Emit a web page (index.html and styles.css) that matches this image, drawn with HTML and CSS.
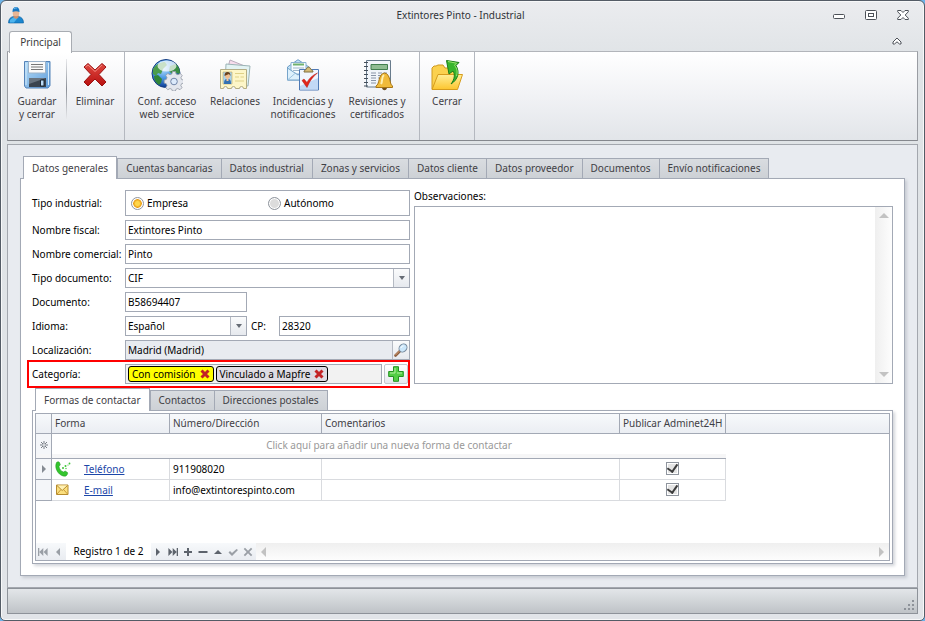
FILE: index.html
```
<!DOCTYPE html>
<html lang="es">
<head>
    <meta charset="UTF-8">
    <meta name="viewport" content="width=device-width, initial-scale=1.0">
    <title>Extintores Pinto - Industrial</title>
    <link rel="stylesheet" href="styles.css">
</head>
<body>
    <div class="window">
        <header class="titlebar">
            <svg class="app-icon" viewBox="0 0 16 18">
                <path d="M.5 17c0-4 2-6 5-6.500h5c3 .5 5 2.500 5 6.500z" fill="#1b87cf" stroke="#0b5ea0" stroke-width=".6"/>
                <path d="M2 14l3-2.500h5l-4 5H2z" fill="#4db4ee"/>
                <path d="M5.500 9h5v2.500L8 13l-2.500-1.500z" fill="#c98f6c"/>
                <circle cx="8" cy="7" r="3.300" fill="#e7b695"/>
                <path d="M4.500 6C4.300 2.500 6 1 8 1s3.700 1.500 3.500 5C9.500 5 6.500 5 4.500 6z" fill="#1677c2"/>
                <path d="M6 3c1-1 2-1.200 3-1" stroke="#7fc8f5" fill="none"/>
            </svg>
            <h1>Extintores Pinto - Industrial</h1>
            <div class="window-buttons">
                <button type="button" aria-label="Minimizar">
                    <svg viewBox="0 0 12 12"><rect x=".5" y="5.500" width="11" height="4" rx="1" fill="#fff" stroke="#4c5158"/></svg>
                </button>
                <button type="button" aria-label="Maximizar">
                    <svg viewBox="0 0 12 12"><rect x=".5" y="1.500" width="11" height="9" rx="1" fill="#fff" stroke="#4c5158"/><rect x="3.500" y="4.500" width="5" height="3" fill="#fff" stroke="#4c5158"/></svg>
                </button>
                <button type="button" aria-label="Cerrar ventana">
                    <svg viewBox="0 0 12 12"><path d="M.7 1.500h3.300l2 2 2-2h3.300v1.300L8.200 6l3.100 3.200v1.300H8l-2-2-2 2H.7V9.200L3.800 6 .7 2.800z" fill="#fff" stroke="#4c5158"/></svg>
                </button>
            </div>
        </header>

        <nav class="ribbon-tabs">
            <button type="button" class="ribbon-tab">Principal</button>
            <button type="button" class="ribbon-toggle" aria-label="Contraer cinta">
                <svg viewBox="0 0 10 8"><path d="M5 1l4 4v2H7.500L5 4.800 2.500 7H1V5z" fill="#fff" stroke="#4c5158"/></svg>
            </button>
        </nav>

        <div class="ribbon">
            <div class="ribbon-group">
                <button type="button" class="ribbon-button">
                    <svg viewBox="0 0 32 32">
                        <defs>
                            <linearGradient id="disk" x1="0" y1="0" x2="1" y2="1"><stop offset="0" stop-color="#b5dbf6"/><stop offset="1" stop-color="#5f9ddb"/></linearGradient>
                        </defs>
                        <path d="M3.500 2.500h25.500v24L27 29H5l-1.500-2z" fill="url(#disk)" stroke="#5583b8"/>
                        <path d="M5 4v22M27.500 4v22" stroke="#d4ebfb"/>
                        <path d="M7.500 2.500h17V14h-17z" fill="#fafafa" stroke="#9cb3ca"/>
                        <path d="M10 5.500h12M10 8h12M10 10.500h12" stroke="#777"/>
                        <path d="M8 19h17v9H8z" fill="#3b444f"/>
                        <path d="M8 19h17l-17 6z" fill="#68737f"/>
                        <path d="M19.500 21h3.500v6h-3.500z" fill="#bcdcf7" stroke="#1b2733"/>
                    </svg>
                    <span>Guardar<br>y cerrar</span>
                </button>
                <div class="ribbon-separator"></div>
                <button type="button" class="ribbon-button">
                    <svg viewBox="0 0 32 32">
                        <defs>
                            <linearGradient id="cross" x1="0" y1="0" x2="0" y2="1"><stop offset="0" stop-color="#e04a42"/><stop offset="1" stop-color="#b80f0f"/></linearGradient>
                        </defs>
                        <path d="M9 4.500l7 6.500 7-6.500L27 8l-7 7.500 7 7.500-4 4-7-7-7 7-4-4 7-7.500L5 8z" fill="url(#cross)" stroke="#9b1212" stroke-linejoin="round"/>
                        <path d="M6.500 8L9 6l7 6.500L23 6" stroke="#f28a80" fill="none"/>
                    </svg>
                    <span>Eliminar</span>
                </button>
            </div>

            <div class="ribbon-group">
                <button type="button" class="ribbon-button wide">
                    <svg viewBox="0 0 32 32">
                        <defs>
                            <radialGradient id="globe" cx=".4" cy=".3" r=".7"><stop offset="0" stop-color="#c2e2fc"/><stop offset=".5" stop-color="#4e9be4"/><stop offset="1" stop-color="#0a3a94"/></radialGradient>
                        </defs>
                        <circle cx="15" cy="14.500" r="14" fill="url(#globe)" stroke="#163c80"/>
                        <path d="M2 10c3-5 8-7 12-7l2 3-4 4-2 5-3-1-2 3-3-2z" fill="#4b9c4c"/>
                        <path d="M3 17l4-1 4 4-1 4-2 2c-3-2-5-5-5-9z" fill="#318636"/>
                        <path d="M19 7l6-2c3 3 4 6 4 10l-4-1-3 2-4-4z" fill="#398e43"/>
                        <ellipse cx="16" cy="7" rx="9.500" ry="5.500" fill="#fff" opacity=".7"/>
                        <g stroke="#9298a3" fill="#e3e6ed">
                            <path d="M21.500 12.500h3l.6 2.500 1.900.8 2.200-1.300 2 2-1.300 2.200.7 1.800 2 .6v3l-2 .6-.8 1.800 1.200 2.200-2 2-2.200-1.200-1.900.8-.5 1.700h-3l-.6-1.700-1.800-.8-2.200 1.200-2-2 1.200-2.200-.8-1.800-2-.6v-3l2-.6.8-1.800-1.200-2.200 2-2 2.200 1.300 1.800-.8z" stroke-width=".8"/>
                            <circle cx="23" cy="22.500" r="3.300" fill="#dceafb" stroke="#7185a8"/>
                        </g>
                    </svg>
                    <span>Conf. acceso<br>web service</span>
                </button>
                <button type="button" class="ribbon-button medium">
                    <svg viewBox="0 0 32 32">
                        <path d="M11 1l17 7-5 14L7 15z" fill="#f7dcec" stroke="#b9abbc"/>
                        <path d="M7 5l24 2-2 20-23-2z" fill="#e3f3f3" stroke="#9cb4b6"/>
                        <path d="M1.500 10.500h26v19h-3a2 2 0 0 0-4 0h-4a2 2 0 0 0-4 0h-4a2 2 0 0 0-4 0h-3z" fill="#fdf6c8" stroke="#b4ad85"/>
                        <path d="M4 13h9v12H4z" fill="#a9d4ee" stroke="#c0a65d" stroke-width=".6"/>
                        <path d="M5 25c0-4 1-5 3.500-5s3.500 1 3.500 5z" fill="#3471b2"/>
                        <path d="M7.500 18h2v4h-2z" fill="#f2c69c"/>
                        <circle cx="8.500" cy="17" r="2.500" fill="#f0be91"/>
                        <path d="M5.500 17c0-3 1-4 3-4s3 1 3 4l-1.500-2z" fill="#6a421c"/>
                        <path d="M16 14.500h9M16 18h4M21.500 18H25M16 22h9" stroke="#dfd188"/>
                    </svg>
                    <span>Relaciones</span>
                </button>
                <button type="button" class="ribbon-button wide">
                    <svg viewBox="0 0 32 32">
                        <path d="M.5 8L11 .7 22 8v13H.5z" fill="#c5e3f7" stroke="#6a9bc4"/>
                        <path d="M4 3.500h15V15H4z" fill="#f7fcff" stroke="#8ab1d0"/>
                        <path d="M6 5.500h11" stroke="#70b16d" stroke-width="2"/>
                        <path d="M6 9h11M6 11.500h11" stroke="#9db5c9"/>
                        <path d="M.5 9l10.500 7 11-7v12H.5z" fill="#ddf0fc" stroke="#76a4ca"/>
                        <path d="M.5 21l8-7M22 21l-8-7" stroke="#9dc3df"/>
                        <path d="M12.500 10.500h19v20.500h-19z" fill="#f0f6ff" stroke="#4e79b5"/>
                        <path d="M13 27l18-8v11.500H13z" fill="#c2d9f6"/>
                        <path d="M17 13c0-2 1.500-2 2.500-3 0-2.500 4-2.500 4 0 1 1 2.500 1 2.500 3z" fill="#d5bc78" stroke="#807041"/>
                        <path d="M15 21.500l2-1.500 3 3.500c2-4 5-7 10.500-9.500C26 17.500 22.500 22 20 28.500z" fill="#e3261b" stroke="#b01410" stroke-width=".5"/>
                    </svg>
                    <span>Incidencias y<br>notificaciones</span>
                </button>
                <button type="button" class="ribbon-button wide">
                    <svg viewBox="0 0 32 32">
                        <path d="M5.500 1.500h24v26.500h-24z" fill="#f1f5fa" stroke="#687b8c"/>
                        <path d="M10 5.500h16.500v5H10z" fill="#8fbd92" stroke="#417e4e"/>
                        <path d="M10 14h5M17 14h4M22.500 14H26M10 16.500h5M17 16.500h4M10 19h5M17 19h3M10 21.500h5M10 24h5" stroke="#8994a6"/>
                        <path d="M3 3.500h4M3 7.500h4M3 11.500h4M3 15.500h4M3 19.500h4M3 23.500h4M3 27h4" stroke="#454e59"/>
                        <path d="M15 27c4-2 2-12 8.500-13 6.500 1 4.500 11 8 13v1.500H15z" fill="#f1bb3a" stroke="#a77516"/>
                        <path d="M20 25c2-3 0-7 3-9" stroke="#fff0b3" stroke-width="2" fill="none"/>
                        <path d="M21 29h5c-1 3-4 3-5 0z" fill="#71501f"/>
                    </svg>
                    <span>Revisiones y<br>certificados</span>
                </button>
            </div>

            <div class="ribbon-group">
                <button type="button" class="ribbon-button narrow">
                    <svg viewBox="0 0 32 32">
                        <defs>
                            <linearGradient id="folder" x1="0" y1="0" x2="0" y2="1"><stop offset="0" stop-color="#ffee96"/><stop offset="1" stop-color="#fcc52e"/></linearGradient>
                        </defs>
                        <path d="M1 30V9l2-2h2l2-1h5l2 3h11v6" fill="#fbd14e" stroke="#cf991f"/>
                        <path d="M1 30.500l6-15h24.500l-5 15z" fill="url(#folder)" stroke="#d69c1c"/>
                        <path d="M20 25c4-5 4-10 2-13l-4 3L15.500 1.500 28 3.500l-3 3c4 7 2 14-5 18.500z" fill="#38b52d" stroke="#1b7d19"/>
                        <path d="M17 2.500l8.500 1.700-2 2c3 4 3 7 2 11" stroke="#9be46f" fill="none"/>
                    </svg>
                    <span>Cerrar</span>
                </button>
            </div>
        </div>

        <main class="content">
            <div class="tabs">
                <button type="button" class="tab active">Datos generales</button>
                <button type="button" class="tab">Cuentas bancarias</button>
                <button type="button" class="tab">Datos industrial</button>
                <button type="button" class="tab">Zonas y servicios</button>
                <button type="button" class="tab">Datos cliente</button>
                <button type="button" class="tab">Datos proveedor</button>
                <button type="button" class="tab">Documentos</button>
                <button type="button" class="tab">Envío notificaciones</button>
            </div>

            <section class="panel">
                <form class="form">
                    <div class="fields">
                        <div class="row" role="radiogroup" aria-labelledby="tipo-label">
                            <span class="label" id="tipo-label">Tipo industrial:</span>
                            <div class="radios">
                                <label><input type="radio" name="tipo" checked>Empresa</label>
                                <label><input type="radio" name="tipo">Autónomo</label>
                            </div>
                        </div>
                        <div class="row">
                            <label class="label" for="fiscal">Nombre fiscal:</label>
                            <input type="text" class="input" id="fiscal" value="Extintores Pinto">
                        </div>
                        <div class="row">
                            <label class="label" for="comercial">Nombre comercial:</label>
                            <input type="text" class="input" id="comercial" value="Pinto">
                        </div>
                        <div class="row">
                            <label class="label" for="tipodoc">Tipo documento:</label>
                            <div class="combo">
                                <select id="tipodoc"><option>CIF</option></select>
                                <span class="combo-arrow"></span>
                            </div>
                        </div>
                        <div class="row">
                            <label class="label" for="documento">Documento:</label>
                            <input type="text" class="input short" id="documento" value="B58694407">
                        </div>
                        <div class="row">
                            <label class="label" for="idioma">Idioma:</label>
                            <div class="combo short">
                                <select id="idioma"><option>Español</option></select>
                                <span class="combo-arrow"></span>
                            </div>
                            <label class="label-cp" for="cp">CP:</label>
                            <input type="text" class="input" id="cp" value="28320">
                        </div>
                        <div class="row">
                            <label class="label" for="localizacion">Localización:</label>
                            <div class="lookup">
                                <input type="text" id="localizacion" value="Madrid (Madrid)" readonly>
                                <button type="button" aria-label="Buscar localización">
                                    <svg viewBox="0 0 14 14">
                                        <path d="M1.500 12.500L6 8" stroke="#8b5c3b" stroke-width="2.600" stroke-linecap="round"/>
                                        <path d="M1.500 12L5.500 8" stroke="#dca47b" stroke-linecap="round"/>
                                        <ellipse cx="9" cy="5" rx="4.300" ry="3.600" transform="rotate(-45 9 5)" fill="#cbe7fb" stroke="#76889b"/>
                                        <path d="M7 5c.3-1.500 1-2 2.500-2" stroke="#fff" fill="none"/>
                                    </svg>
                                </button>
                            </div>
                        </div>
                        <div class="row highlight">
                            <span class="label">Categoría:</span>
                            <div class="chips">
                                <span class="chip yellow">Con comisión
                                    <button type="button" aria-label="Quitar Con comisión"><svg viewBox="0 0 10 10"><path d="M1.500 1.500l7 7M8.500 1.500l-7 7" stroke="#c32225" stroke-width="3"/></svg></button>
                                </span>
                                <span class="chip">Vinculado a Mapfre
                                    <button type="button" aria-label="Quitar Vinculado a Mapfre"><svg viewBox="0 0 10 10"><path d="M1.500 1.500l7 7M8.500 1.500l-7 7" stroke="#c32225" stroke-width="3"/></svg></button>
                                </span>
                            </div>
                            <button type="button" class="add" aria-label="Añadir categoría">
                                <svg viewBox="0 0 16 16">
                                    <path d="M5.500.7h5v4.800h4.800v5h-4.800v4.800h-5v-4.800H.7v-5h4.800z" fill="#53cd45" stroke="#239321" stroke-linejoin="round"/>
                                    <path d="M7 2v5H2M9 7h5" stroke="#b2f0a0" fill="none"/>
                                </svg>
                            </button>
                        </div>
                    </div>

                    <div class="notes">
                        <label for="observaciones">Observaciones:</label>
                        <div class="notes-box">
                            <textarea id="observaciones"></textarea>
                            <div class="scroll-y"><i class="arrow up"></i><i class="arrow down"></i></div>
                        </div>
                    </div>
                </form>

                <div class="tabs inner">
                    <button type="button" class="tab active">Formas de contactar</button>
                    <button type="button" class="tab">Contactos</button>
                    <button type="button" class="tab">Direcciones postales</button>
                </div>

                <div class="subpanel">
                    <div class="grid">
                        <table>
                            <colgroup>
                                <col class="col-mark"><col class="col-form"><col class="col-number"><col class="col-comments"><col class="col-publish"><col>
                            </colgroup>
                            <thead>
                                <tr><th></th><th>Forma</th><th>Número/Dirección</th><th>Comentarios</th><th>Publicar Adminet24H</th><th></th></tr>
                            </thead>
                            <tbody>
                                <tr class="new-row">
                                    <td class="mark"><svg viewBox="0 0 8 8"><path d="M4 0v8M0 4h8M1 1l6 6M7 1L1 7" stroke="#777d85"/><circle cx="4" cy="4" r="1" fill="#f4f6f9"/></svg></td>
                                    <td colspan="4">Click aquí para añadir una nueva forma de contactar</td>
                                    <td class="blank"></td>
                                </tr>
                                <tr>
                                    <td class="mark"><svg viewBox="0 0 8 8"><path d="M2 0l4 4-4 4z" fill="#858b93"/></svg></td>
                                    <td>
                                        <div class="kind">
                                            <svg viewBox="0 0 16 16">
                                                <path d="M1.500 1.500c1-1 2.500-1 3 0l.8 2.200L4 5.500c.3 2.500 2 4.700 4.500 5.500l1.700-1 2.300 1.500c.6 1-.5 2.500-1.500 3.500C5 16.500-1.500 8 1.500 1.500z" fill="#34c52e" stroke="#1e9522" stroke-width=".5"/>
                                                <g fill="#3ec636"><circle cx="8" cy="7" r="1"/><circle cx="10.500" cy="5" r="1"/><circle cx="11" cy="7.500" r=".7"/><circle cx="14.500" cy="2.500" r=".9"/><circle cx="13" cy="4" r=".6"/></g>
                                            </svg>
                                            <a href="#">Teléfono</a>
                                        </div>
                                    </td>
                                    <td>911908020</td>
                                    <td></td>
                                    <td class="center"><input type="checkbox" aria-label="Publicar teléfono" checked></td>
                                    <td class="blank"></td>
                                </tr>
                                <tr>
                                    <td class="mark"></td>
                                    <td>
                                        <div class="kind">
                                            <svg viewBox="0 0 16 16">
                                                <path d="M1.500 3h11.500v9.500H1.500z" fill="#fbdf7e" stroke="#b68b2e"/>
                                                <path d="M2 12l4-4.500M12.500 12l-4-4.500" stroke="#c99a36"/>
                                                <path d="M2 3.500l5.200 5 5.300-5" fill="#fff1b5" stroke="#b68b2e"/>
                                            </svg>
                                            <a href="#">E-mail</a>
                                        </div>
                                    </td>
                                    <td>info@extintorespinto.com</td>
                                    <td></td>
                                    <td class="center"><input type="checkbox" aria-label="Publicar e-mail" checked></td>
                                    <td class="blank"></td>
                                </tr>
                            </tbody>
                        </table>

                        <div class="navigator">
                            <button type="button" class="off" aria-label="Primero"><svg viewBox="0 0 10 10"><path d="M0 1h1.300v8H0zM5.300 1v8l-4-4zM9.600 1v8l-4-4z"/></svg></button>
                            <button type="button" class="off" aria-label="Anterior"><svg viewBox="0 0 10 10"><path d="M7 1v8L3 5z"/></svg></button>
                            <span class="record">Registro 1 de 2</span>
                            <button type="button" aria-label="Siguiente"><svg viewBox="0 0 10 10"><path d="M3 1v8l4-4z"/></svg></button>
                            <button type="button" aria-label="Último"><svg viewBox="0 0 10 10"><path d="M8.700 1H10v8H8.700zM4.700 1v8l4-4zM.4 1v8l4-4z"/></svg></button>
                            <button type="button" aria-label="Añadir"><svg viewBox="0 0 10 10"><path d="M4 1h2v3h3v2H6v3H4V6H1V4h3z"/></svg></button>
                            <button type="button" aria-label="Borrar"><svg viewBox="0 0 10 10"><path d="M.5 4h9v2h-9z"/></svg></button>
                            <button type="button" aria-label="Editar"><svg viewBox="0 0 10 10"><path d="M5 3l4 4H1z"/></svg></button>
                            <button type="button" class="off" aria-label="Aceptar"><svg viewBox="0 0 10 10"><path d="M.5 5.500L2 4l2 2 4.500-4L10 3 4 9z"/></svg></button>
                            <button type="button" class="off" aria-label="Cancelar"><svg viewBox="0 0 10 10"><path d="M2 .7l3 3 3-3L9.300 2l-3 3 3 3L8 9.300l-3-3-3 3L.7 8l3-3-3-3z"/></svg></button>
                            <div class="scroll-x"><i class="arrow left"></i><i class="arrow right"></i></div>
                        </div>
                    </div>
                </div>
            </section>
        </main>

        <footer class="statusbar">
            <svg viewBox="0 0 11 11"><path d="M8 0h2v2H8zM4 4h2v2H4zM8 4h2v2H8zM0 8h2v2H0zM4 8h2v2H4zM8 8h2v2H8z" fill="#8d9299"/></svg>
        </footer>
    </div>
</body>
</html>
```
FILE: styles.css
```
* {
    box-sizing: border-box;
}
body {
    margin: 0;
    background: #6db3e8;
    font-family: Tahoma, "Noto Sans", sans-serif;
    font-size: 10px;
    line-height: 13px;
    color: #000;
}
button, input, select, textarea {
    margin: 0;
    padding: 0;
    border: 0;
    background: none;
    font: inherit;
    color: inherit;
}
svg {
    display: block;
    flex: none;
}
.window {
    display: flex;
    flex-direction: column;
    min-height: 100vh;
    padding: 0 6px 6px;
    border: 1px solid #545c66;
    border-radius: 6px 6px 5px 5px;
    background: linear-gradient(#ebecef, #dfe3e6 60px, #e1e4e8);
    box-shadow: inset 0 0 0 1px #f7f8f9;
}

/* title bar */
.titlebar {
    display: grid;
    grid-template-columns: 88px 1fr 92px;
    align-items: center;
    height: 30px;
    padding-bottom: 2px;
}
.app-icon {
    width: 16px;
    height: 18px;
    margin-left: 1px;
}
.titlebar h1 {
    margin: 0;
    font-size: 10px;
    font-weight: normal;
    text-align: center;
    color: #303338;
}
.window-buttons {
    display: flex;
    justify-content: flex-end;
    gap: 20px;
    padding-right: 9px;
}
.window-buttons svg {
    width: 12px;
    height: 12px;
}

/* ribbon */
.ribbon-tabs {
    display: flex;
    justify-content: space-between;
    align-items: center;
    height: 20px;
    padding: 0 16px 0 2px;
}
.ribbon-tab {
    z-index: 1;
    width: 63px;
    height: 22px;
    border: 1px solid #a8acb2;
    border-bottom: 0;
    border-radius: 3px 3px 0 0;
    background: #fff;
    color: #3b3b3b;
    align-self: flex-start;
}
.ribbon-toggle svg {
    width: 10px;
    height: 8px;
}
.ribbon {
    display: flex;
    height: 90px;
    border: 1px solid #9a9da3;
    border-top-color: #b2b5ba;
    border-bottom-color: #85888e;
    background: linear-gradient(#fff, #f1f2f5 50%, #e2e5e9);
}
.ribbon-group {
    display: flex;
    padding: 7px 5px 0;
    border-right: 1px solid #b4b8bf;
}
.ribbon-button {
    display: flex;
    flex-direction: column;
    align-items: center;
    gap: 4px;
    width: 48px;
    height: 62px;
    color: #3f4045;
    white-space: nowrap;
}
.ribbon-button.wide {
    width: 74px;
}
.ribbon-button.medium {
    width: 62px;
}
.ribbon-button.narrow {
    width: 44px;
}
.ribbon-button svg {
    width: 32px;
    height: 32px;
}
.ribbon-separator {
    width: 1px;
    height: 60px;
    margin: 0 4px 0 5px;
    background: linear-gradient(#e8e9ec, #8b8f96, #e8e9ec);
}

/* tabs */
.content {
    display: flex;
    flex-direction: column;
    flex: 1;
    margin-top: 3px;
    padding: 11px 12px;
    border: 1px solid #a3a7ae;
    background: #e8ebf0;
}
.tabs {
    display: flex;
    align-items: flex-end;
    padding-left: 3px;
}
.tab {
    height: 20px;
    margin-right: -1px;
    padding: 0 8px;
    border: 1px solid #a3a9b5;
    border-bottom: 0;
    background: linear-gradient(#d9dce0, #cdd1d6);
    color: #3f4045;
    white-space: nowrap;
}
.tab.active {
    z-index: 1;
    height: 23px;
    margin-right: 0;
    margin-bottom: -1px;
    background: #fff;
}
.tabs.inner {
    height: 22px;
    margin-top: 4px;
}
.panel {
    display: flex;
    flex-direction: column;
    flex: 1;
    padding: 11px;
    border: 1px solid #a3a9b5;
    background: #fff;
    box-shadow: 2px 2px 3px #c7cbd2;
}

/* form */
.form {
    display: grid;
    grid-template-columns: 378px 1fr;
    gap: 4px;
}
.fields {
    display: flex;
    flex-direction: column;
    gap: 4px;
}
.row {
    display: flex;
    align-items: center;
}
.label {
    flex: none;
    width: 93px;
    white-space: nowrap;
}
.label-cp {
    width: 32px;
    padding-left: 4px;
}
.input, .combo, .lookup, .radios {
    flex: 1;
    min-width: 0;
    height: 20px;
    border: 1px solid #a3a9b5;
    background: #fff;
}
.input {
    padding: 0 2px;
}
.short {
    flex: 0 0 122px;
}
.radios {
    display: grid;
    grid-template-columns: 137px 1fr;
    align-items: center;
    height: 26px;
    padding: 0 0 0 5px;
}
.radios label {
    display: flex;
    align-items: center;
    gap: 3px;
}
input[type="radio"] {
    appearance: none;
    width: 13px;
    height: 13px;
    border: 1px solid #8f959e;
    border-radius: 50%;
    background: #dcdcdc;
    box-shadow: inset 0 0 0 1px #fff;
}
input[type="radio"]:checked {
    background: radial-gradient(circle, #ffd64a 2px, #e79a12 4px, #fff 5px);
}
.combo, .lookup {
    display: flex;
}
.combo select {
    appearance: none;
    flex: 1;
    padding: 0 2px;
}
.combo-arrow {
    display: flex;
    align-items: center;
    justify-content: center;
    width: 16px;
    border-left: 1px solid #b5bac3;
    background: linear-gradient(#fafbfc, #e6e9ee);
    pointer-events: none;
}
.combo-arrow::after {
    content: "";
    border: 3px solid transparent;
    border-top: 4px solid #666c75;
    border-bottom: 0;
}
.lookup {
    background: #e8ebf0;
}
.lookup input {
    flex: 1;
    padding: 0 2px;
}
.lookup button {
    width: 17px;
    padding-left: 1px;
    border-left: 1px solid #b5bac3;
    background: linear-gradient(#fafbfc, #e6e9ee);
}
.lookup svg {
    width: 14px;
    height: 14px;
}
.highlight {
    margin: -4px 0 -4px -5px;
    padding: 2px 0 2px 3px;
    border: 2px solid #f00;
}
.chips {
    display: flex;
    align-items: center;
    flex: 1;
    gap: 2px;
    height: 20px;
    margin-right: 2px;
    padding-left: 2px;
    border: 1px solid #a3a9b5;
    background: #f2f2f2;
}
.chip {
    display: flex;
    align-items: center;
    gap: 4px;
    height: 16px;
    padding: 0 3px;
    border: 1px solid #000;
    border-radius: 3px;
    background: #dedbe3;
    white-space: nowrap;
}
.chip.yellow {
    background: #ff0;
}
.chip svg {
    width: 10px;
    height: 10px;
}
.add {
    width: 24px;
    height: 20px;
    padding: 0 3px;
    border: 1px solid #c3c7ce;
    border-radius: 2px;
    background: linear-gradient(#fff, #e6e9ee);
}
.add svg {
    width: 16px;
    height: 16px;
}
.notes {
    display: flex;
    flex-direction: column;
    gap: 3px;
}
.notes-box {
    display: flex;
    flex: 1;
    border: 1px solid #a3a9b5;
}
.notes-box textarea {
    flex: 1;
    resize: none;
}
.scroll-y {
    display: flex;
    flex-direction: column;
    justify-content: space-between;
    align-items: center;
    width: 17px;
    padding: 6px 0;
    background: linear-gradient(90deg, #efefef, #fdfdfd);
}
.arrow {
    border: 5px solid transparent;
}
.arrow.up {
    border-top: 0;
    border-bottom-color: #c2c2c2;
}
.arrow.down {
    border-bottom: 0;
    border-top-color: #c2c2c2;
}
.arrow.left {
    border-left: 0;
    border-right-color: #c2c2c2;
}
.arrow.right {
    border-right: 0;
    border-left-color: #c2c2c2;
}

/* contact grid */
.subpanel {
    display: flex;
    flex: 1;
    padding: 2px;
    border: 1px solid #a3a9b5;
    box-shadow: 2px 2px 3px #d3d6db;
}
.grid {
    display: flex;
    flex-direction: column;
    justify-content: space-between;
    flex: 1;
    border: 1px solid #a3a9b5;
}
table {
    width: 100%;
    border-collapse: separate;
    border-spacing: 0;
    table-layout: fixed;
}
.col-mark {
    width: 16px;
}
.col-form {
    width: 118px;
}
.col-number {
    width: 152px;
}
.col-comments {
    width: 298px;
}
.col-publish {
    width: 106px;
}
th, td {
    height: 21px;
    padding: 0 3px;
    border-right: 1px solid #d9dbdf;
    border-bottom: 1px solid #d9dbdf;
    text-align: left;
    white-space: nowrap;
}
th {
    height: 20px;
    border-color: #a3a9b5;
    background: linear-gradient(#f7f9fb, #ebeef3);
    font-weight: normal;
    color: #3f4045;
}
th:last-child {
    border-right: 0;
}
td.mark {
    padding: 0 4px;
    border-color: #a3a9b5;
    background: #f4f6f9;
}
.mark svg {
    width: 8px;
    height: 8px;
}
td.blank {
    border: 0;
}
.new-row td {
    height: 25px;
    padding-bottom: 2px;
    border-color: #a3a9b5;
    border-right: 0;
    text-align: center;
    color: #999;
    box-shadow: inset 0 -4px #f6f6f7;
}
.new-row td.mark {
    border-right: 1px solid #a3a9b5;
}
.new-row td.blank {
    box-shadow: none;
}
.kind {
    display: flex;
    align-items: center;
    gap: 13px;
}
.kind svg {
    width: 16px;
    height: 16px;
}
a {
    color: #1c47a8;
}
td.center {
    padding-bottom: 2px;
}
input[type="checkbox"] {
    appearance: none;
    display: grid;
    place-content: center;
    width: 13px;
    height: 13px;
    margin: 0 auto;
    border: 1px solid #8f959e;
    background: #e4e4e4;
    box-shadow: inset 0 0 0 1px #fff;
}
input[type="checkbox"]:checked::after {
    content: "";
    width: 5px;
    height: 8px;
    margin-bottom: 2px;
    border: solid #3c3c3c;
    border-width: 0 2px 2px 0;
    transform: rotate(35deg);
}
.navigator {
    display: flex;
    height: 17px;
}
.navigator button {
    width: 15px;
    padding: 0 2px;
    background: linear-gradient(#f7f9fb, #e9ecf1);
}
.navigator svg {
    width: 10px;
    height: 10px;
    fill: #5d636c;
}
.navigator .off svg {
    fill: #9a9fa6;
}
.record {
    width: 85px;
    line-height: 17px;
    text-align: center;
    white-space: nowrap;
}
.scroll-x {
    display: flex;
    flex: 1;
    justify-content: space-between;
    align-items: center;
    padding: 0 5px;
    background: linear-gradient(#efefef, #fdfdfd);
}

/* status bar */
.statusbar {
    display: flex;
    justify-content: flex-end;
    align-items: flex-end;
    height: 26px;
    padding: 0 2px 2px;
    border: 1px solid #8d9299;
    background: linear-gradient(#e3e6e9, #bfc3c7);
}
.statusbar svg {
    width: 11px;
    height: 11px;
}
```
